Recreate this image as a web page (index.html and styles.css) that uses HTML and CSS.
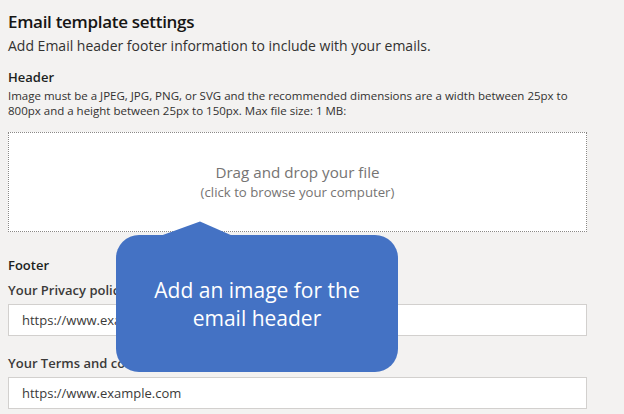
FILE: index.html
```html
<!DOCTYPE html>
<html lang="en">
<head>
<meta charset="utf-8">
<title>Email template settings</title>
<link rel="stylesheet" href="styles.css">
</head>
<body>
<main class="page">
  <h1 class="title">Email template settings</h1>
  <p class="subtitle">Add Email header footer information to include with your emails.</p>

  <section class="section header-section">
    <h2 class="section-title">Header</h2>
    <p class="hint">Image must be a JPEG, JPG, PNG, or SVG and the recommended dimensions are a width between 25px to 800px and a height between 25px to 150px. Max file size: 1 MB:</p>
    <div class="dropzone">
      <span class="drop-main">Drag and drop your file</span>
      <span class="drop-sub">(click to browse your computer)</span>
    </div>
  </section>

  <section class="section footer-section">
    <h2 class="section-title">Footer</h2>
    <label class="field">
      <span class="field-label">Your Privacy policy URL</span>
      <input class="field-input" type="text" value="https://www.example.com">
    </label>
    <label class="field">
      <span class="field-label">Your Terms and conditions URL</span>
      <input class="field-input" type="text" value="https://www.example.com">
    </label>
  </section>

  <div class="callout">
    <svg class="callout-arrow" width="74" height="15" viewBox="0 0 74 15" aria-hidden="true">
      <polygon points="0,15 40,0.5 73,15" fill="#4472c4"/>
    </svg>
    <p class="callout-text">Add an image for the<br>email header</p>
  </div>
</main>
</body>
</html>
```
FILE: styles.css
```css
html, body {
  margin: 0;
  padding: 0;
  background: #f3f2f1;
}
body {
  width: 624px;
  height: 414px;
  overflow: hidden;
  font-family: "Open Sans", "Noto Sans", sans-serif;
  color: #323130;
}
.page {
  position: relative;
  padding: 10px 37px 0 8px;
  display: flex;
  flex-direction: column;
}
.title {
  margin: 0;
  font-size: 17px;
  font-weight: 600;
  letter-spacing: -0.3px;
  line-height: 24px;
  color: #161514;
}
.subtitle {
  margin: 1px 0 0;
  font-size: 14px;
  line-height: 22px;
  color: #323130;
}
.section-title {
  margin: 0;
  font-size: 13px;
  font-weight: 600;
  line-height: 18px;
  color: #201f1e;
}
.header-section {
  margin-top: 11px;
  display: flex;
  flex-direction: column;
}
.hint {
  margin: 2px 0 14px;
  font-size: 11.5px;
  line-height: 15px;
  color: #323130;
}
.dropzone {
  height: 98px;
  background: #ffffff;
  border: 1px dotted #8a8886;
  display: flex;
  flex-direction: column;
  align-items: center;
  justify-content: center;
}
.drop-main {
  font-size: 15.2px;
  line-height: 20px;
  color: #767473;
}
.drop-sub {
  font-size: 13.2px;
  line-height: 20px;
  color: #767473;
}
.footer-section {
  margin-top: 24px;
  display: flex;
  flex-direction: column;
}
.field {
  display: flex;
  flex-direction: column;
  margin-top: 6px;
}
.field + .field {
  margin-top: 17px;
}
.field-label {
  font-size: 13px;
  font-weight: 600;
  line-height: 20px;
  color: #3b3a39;
}
.field-input {
  margin: 4px 0 0;
  height: 32px;
  box-sizing: border-box;
  padding: 0 13px;
  border: 1px solid #d2d0ce;
  background: #ffffff;
  font-family: "Open Sans", "Noto Sans", sans-serif;
  font-size: 13px;
  color: #3b3a39;
  outline: none;
}
.callout {
  position: absolute;
  left: 116px;
  top: 235px;
  width: 282px;
  height: 137px;
  background: #4472c4;
  border-radius: 23px;
  display: flex;
  align-items: center;
  justify-content: center;
}
.callout-arrow {
  position: absolute;
  left: 44px;
  top: -14px;
  display: block;
}
.callout-text {
  margin: 0;
  text-align: center;
  color: #ffffff;
  font-size: 21px;
  line-height: 28px;
}
```
